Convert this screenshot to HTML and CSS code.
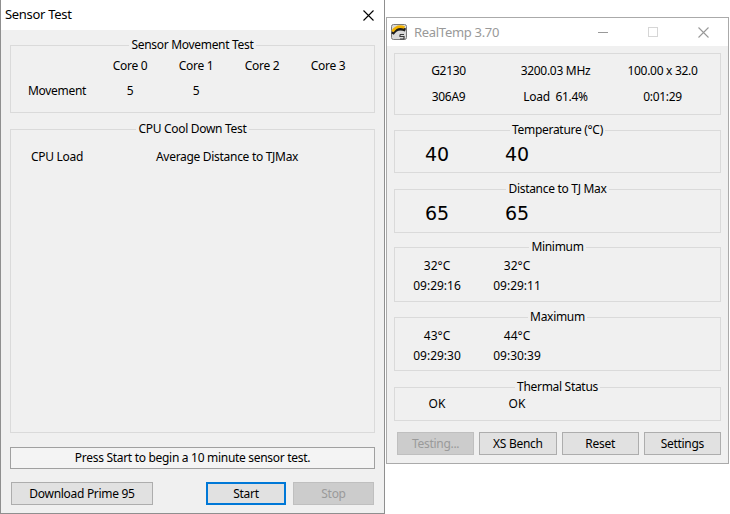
FILE: index.html
```html
<!DOCTYPE html>
<html lang="en">
<head>
  <meta charset="UTF-8">
  <title>Sensor Test / RealTemp</title>
  <link rel="stylesheet" href="styles.css">
</head>
<body>
  <!-- Sensor Test dialog -->
  <div class="win sensor">
    <div class="titlebar">
      <span class="title">Sensor Test</span>
      <svg class="close" width="11" height="11" viewBox="0 0 11 11"><path d="M0.5 0.5L10.5 10.5M10.5 0.5L0.5 10.5" stroke="#000" stroke-width="1.1" fill="none"/></svg>
    </div>
    <div class="body">
      <fieldset class="grp move">
        <legend>Sensor Movement Test</legend>
        <div class="cores">
          <span></span><span>Core 0</span><span>Core 1</span><span>Core 2</span><span>Core 3</span>
          <span class="lbl">Movement</span><span>5</span><span>5</span><span></span><span></span>
        </div>
      </fieldset>
      <fieldset class="grp cool">
        <legend>CPU Cool Down Test</legend>
        <div class="cool-head">
          <span>CPU Load</span>
          <span>Average Distance to TJMax</span>
        </div>
      </fieldset>
      <div class="status">Press Start to begin a 10 minute sensor test.</div>
      <div class="actions">
        <button class="btn prime">Download Prime 95</button>
        <button class="btn start default">Start</button>
        <button class="btn stop" disabled>Stop</button>
      </div>
    </div>
  </div>

  <!-- RealTemp main window -->
  <div class="win realtemp">
    <div class="titlebar">
      <svg class="app-icon" width="16" height="16" viewBox="0 0 16 16">
        <rect x="0.5" y="0.5" width="15" height="15" rx="2" fill="#dadada" stroke="#7a7a7a"/>
        <path d="M1.5 10 Q6 2.5 14.5 6" stroke="#1e1e1e" stroke-width="3" fill="none"/>
        <path d="M1.5 7.5 Q6 0.5 13.5 3.5" stroke="#f2b200" stroke-width="2.6" fill="none"/>
        <path d="M9 10.5h4M9 10.5v2h4v2.5h-4" stroke="#3c3c3c" stroke-width="1.2" fill="none"/>
      </svg>
      <span class="title">RealTemp 3.70</span>
      <div class="caps">
        <span class="cap"><svg width="10" height="10" viewBox="0 0 10 10"><path d="M0 5.5H10" stroke="#999" fill="none"/></svg></span>
        <span class="cap"><svg width="10" height="10" viewBox="0 0 10 10"><rect x="0.5" y="0.5" width="9" height="9" stroke="#d6d6d6" fill="none"/></svg></span>
        <span class="cap"><svg width="11" height="11" viewBox="0 0 11 11"><path d="M0.5 0.5L10.5 10.5M10.5 0.5L0.5 10.5" stroke="#999" stroke-width="1.1" fill="none"/></svg></span>
      </div>
    </div>
    <div class="body">
      <div class="grp info">
        <span>G2130</span><span>3200.03 MHz</span><span>100.00 x 32.0</span>
        <span>306A9</span><span class="pre">Load  61.4%</span><span>0:01:29</span>
      </div>
      <fieldset class="grp temp">
        <legend>Temperature (°C)</legend>
        <div class="big"><span>40</span><span>40</span></div>
      </fieldset>
      <fieldset class="grp dist">
        <legend>Distance to TJ Max</legend>
        <div class="big"><span>65</span><span>65</span></div>
      </fieldset>
      <fieldset class="grp minmax min">
        <legend>Minimum</legend>
        <div class="vals">
          <span>32°C</span><span>32°C</span>
          <span>09:29:16</span><span>09:29:11</span>
        </div>
      </fieldset>
      <fieldset class="grp minmax max">
        <legend>Maximum</legend>
        <div class="vals">
          <span>43°C</span><span>44°C</span>
          <span>09:29:30</span><span>09:30:39</span>
        </div>
      </fieldset>
      <fieldset class="grp thermal">
        <legend>Thermal Status</legend>
        <div class="vals"><span>OK</span><span>OK</span></div>
      </fieldset>
      <div class="rt-buttons">
        <button class="btn" disabled>Testing...</button>
        <button class="btn">XS Bench</button>
        <button class="btn">Reset</button>
        <button class="btn">Settings</button>
      </div>
    </div>
  </div>
</body>
</html>
```

FILE: styles.css
```css
body {
  margin: 0;
  width: 730px;
  height: 514px;
  position: relative;
  overflow: hidden;
  background: #fff;
  font-family: "Noto Sans", sans-serif;
  font-size: 12px;
  letter-spacing: -0.3px;
  color: #000;
}

/* windows on the desktop */
.win {
  position: absolute;
  box-sizing: border-box;
  display: flex;
  flex-direction: column;
  background: #f0f0f0;
}
.sensor { left: 0; top: 0; width: 385px; height: 514px; border: 1px solid #8f8f8f; border-top: 0; }
.realtemp { left: 386px; top: 17px; width: 343px; height: 447px; border: 1px solid #aaaaaa; }

.titlebar { background: #fff; display: flex; align-items: center; flex: none; }
.sensor .titlebar { height: 30px; padding-left: 4px; }
.sensor .title { font-size: 13px; line-height: 16px; margin-top: -2px; }
.sensor .close { margin-left: auto; margin-right: 10px; }

.realtemp .titlebar { height: 28px; }
.app-icon { margin-left: 4px; }
.realtemp .title { font-size: 13px; color: #999; margin-left: 7px; }
.caps { margin-left: auto; display: flex; }
.cap { width: 50px; height: 28px; display: flex; align-items: center; justify-content: center; }

.body { flex: 1; display: flex; flex-direction: column; }
.sensor .body { padding: 7px 9px 8px; }
.realtemp .body { padding: 7px 7px 8px; }

/* group boxes */
.grp {
  margin: 0;
  padding: 0;
  border: 1px solid #dadada;
  min-width: 0;
}
.grp legend {
  margin: 0 auto;
  padding: 0 2px;
  line-height: 16px;
  height: 16px;
}

/* Sensor Test */
.move { padding: 5px 0 13px; }
.cores {
  display: grid;
  grid-template-columns: 69px repeat(4, 66px);
  grid-auto-rows: 16px;
  row-gap: 9px;
  padding-left: 17px;
  line-height: 16px;
  text-align: center;
}
.cores .lbl { text-align: left; }
.cool { flex: 1; margin-top: 8px; padding: 12px 0 0; }
.cool-head { display: grid; grid-template-columns: 125px auto; padding-left: 20px; line-height: 16px; }

.status {
  margin-top: 14px;
  height: 22px;
  box-sizing: border-box;
  border: 1px solid #a0a0a0;
  background: #f4f4f4;
  text-align: center;
  line-height: 20px;
}

.btn {
  font-family: inherit;
  font-size: 12px;
  letter-spacing: inherit;
  color: #000;
  height: 23px;
  padding: 0;
  box-sizing: border-box;
  background: #e1e1e1;
  border: 1px solid #adadad;
  line-height: 20px;
}
.btn:disabled { background: #cccccc; border-color: #bfbfbf; color: #9a9a9a; }
.btn.default { border-color: #0078d7; box-shadow: inset 0 0 0 1px #0078d7; }

.actions { margin: 13px 1px 0; display: flex; gap: 7px; }
.prime { width: 142px; }
.start { width: 80px; margin-left: auto; }
.stop { width: 81px; }

/* RealTemp */
.info {
  padding: 9px 0;
  display: grid;
  grid-template-columns: repeat(3, 107px);
  grid-auto-rows: 16px;
  row-gap: 10px;
  line-height: 16px;
  text-align: center;
}
.pre { white-space: pre; }

.big {
  display: grid;
  grid-template-columns: repeat(2, 80px);
  padding-left: 2px;
  font-family: "DejaVu Sans", sans-serif;
  font-size: 19px;
  letter-spacing: 0;
  line-height: 24px;
  text-align: center;
}
.temp { margin-top: 7px; padding: 4px 0 6px; }
.dist { margin-top: 8px; padding: 4px 0 7px; }

.vals {
  display: grid;
  grid-template-columns: repeat(2, 80px);
  grid-auto-rows: 16px;
  row-gap: 4px;
  padding-left: 2px;
  letter-spacing: 0;
  line-height: 16px;
  text-align: center;
}
.min { margin-top: 6px; padding: 3px 0 7px; }
.max { margin-top: 7px; padding: 3px 0 6px; }
.thermal { margin-top: 8px; padding: 1px 0 8px; }

.rt-buttons {
  margin-top: 11px;
  padding-left: 3px;
  display: grid;
  grid-template-columns: repeat(4, 1fr);
  gap: 5px;
}
```
